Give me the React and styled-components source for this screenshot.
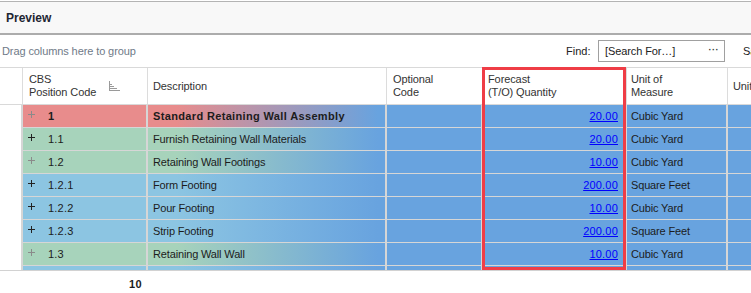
import React from "react";
import styled, { createGlobalStyle } from "styled-components";

const Global = createGlobalStyle`
  html, body { margin: 0; padding: 0; background: #ffffff; overflow: hidden; }
  body { font-family: "Liberation Sans", Arial, sans-serif; font-size: 11px; color: #1c1c1c; }
  * { box-sizing: border-box; }
`;

const BLUE = "#68a3df";
const LEVEL_COLORS = { 1: "#e88c8c", 2: "#a7d3bb", 3: "#8cc5e2" };
const COLS = "23px 125px 239px 96px 144px 101px 60px";
const LINE = "#d6d6d6";

const Page = styled.div`
  width: 751px;
  height: 293px;
  padding-top: 1px;
  overflow: hidden;
`;

const TitleBar = styled.div`
  height: 34px;
  border-top: 1px solid #b4b4b4;
  border-bottom: 2px solid #acacac;
  background: #f8f8f8;
  display: flex;
  align-items: center;
  padding-left: 6px;
  font-size: 12px;
  font-weight: bold;
  color: #1e2633;
`;

const GroupBar = styled.div`
  height: 32px;
  display: flex;
  align-items: center;
  white-space: nowrap;
`;

const DragHint = styled.div`
  flex: 0 0 566px;
  padding-left: 2px;
  color: #6f7a88;
  letter-spacing: -0.1px;
`;

const FindLabel = styled.span`
  flex: 0 0 32px;
  color: #222;
`;

const SearchBox = styled.div`
  flex: 0 0 127px;
  height: 22px;
  border: 1px solid #a0a0a0;
  display: flex;
  align-items: center;
  justify-content: space-between;
  padding: 0 5px 0 6px;
  color: #222;
  letter-spacing: -0.1px;
`;

const Dots = styled.span`
  font-weight: bold;
  letter-spacing: 0.5px;
  font-size: 9px;
  color: #333;
  margin-top: -2px;
`;

const Trailing = styled.span`
  flex: 0 0 auto;
  margin-left: 18px;
  color: #222;
`;

const GridWrap = styled.div`
  position: relative;
`;

const HeaderRow = styled.div`
  display: grid;
  grid-template-columns: ${COLS};
  height: 38px;
  border-top: 1px solid #d9d9d9;
  border-bottom: 1px solid #d9d9d9;
  background: #fff;
`;

const HeaderCell = styled.div`
  border-right: 1px solid #dcdcdc;
  padding: 0 0 0 ${(p) => p.$pad ?? 5}px;
  display: flex;
  align-items: center;
  line-height: 13px;
  color: #333;
  letter-spacing: -0.1px;
  white-space: nowrap;
  overflow: hidden;
`;

const SortIcon = styled.svg`
  margin-left: 13px;
  flex: 0 0 auto;
`;

const Body = styled.div`
  height: 166px;
  overflow: hidden;
  border-bottom: 1px solid #d2d2d2;
`;

const Row = styled.div`
  display: grid;
  grid-template-columns: ${COLS};
  height: 23px;
`;

const Cell = styled.div`
  border-right: 2px solid ${LINE};
  border-bottom: 1px solid ${LINE};
  background: ${BLUE};
  display: flex;
  align-items: center;
  padding: 0 5px;
  white-space: nowrap;
  overflow: hidden;
  letter-spacing: -0.15px;
`;

const UnitCell = styled(Cell)`
  padding-left: 4px;
`;

const IndicatorCell = styled.div`
  background: #fff;
  border-right: 2px solid ${LINE};
`;

const CodeCell = styled(Cell)`
  background: ${(p) => LEVEL_COLORS[p.$level]};
  padding-left: 5px;
`;

const DescCell = styled(Cell)`
  background: linear-gradient(to right, ${(p) => LEVEL_COLORS[p.$level]} 0%, ${(p) => LEVEL_COLORS[p.$level]} 12%, ${BLUE} 97%);
  font-weight: ${(p) => (p.$bold ? "bold" : "normal")};
  letter-spacing: ${(p) => (p.$bold ? "0.35px" : "-0.15px")};
`;

const QtyCell = styled(Cell)`
  justify-content: flex-end;
  padding-right: 7px;
`;

const QtyLink = styled.a`
  color: #0000ff;
  text-decoration: underline;
  letter-spacing: 0.2px;
`;

const Code = styled.span`
  margin-left: 13px;
  font-weight: ${(p) => (p.$bold ? "bold" : "normal")};
  letter-spacing: 0.2px;
`;

const PlusIcon = styled.svg`
  flex: 0 0 auto;
  margin-top: -3px;
`;

const Highlight = styled.div`
  position: absolute;
  left: 482px;
  top: 0;
  width: 144px;
  height: 203px;
  border: 3px solid #ef3d46;
  pointer-events: none;
`;

const Footer = styled.div`
  display: grid;
  grid-template-columns: ${COLS};
  height: 26px;
  align-items: center;
`;

const FooterValue = styled.div`
  grid-column: 2;
  text-align: right;
  padding-right: 6px;
  font-weight: bold;
  letter-spacing: 0.4px;
`;

const rows = [
  { level: 1, code: "1", desc: "Standard Retaining Wall Assembly", qty: "20.00", unit: "Cubic Yard", bold: true, faint: true },
  { level: 2, code: "1.1", desc: "Furnish Retaining Wall Materials", qty: "20.00", unit: "Cubic Yard" },
  { level: 2, code: "1.2", desc: "Retaining Wall Footings", qty: "10.00", unit: "Cubic Yard", faint: true },
  { level: 3, code: "1.2.1", desc: "Form Footing", qty: "200.00", unit: "Square Feet" },
  { level: 3, code: "1.2.2", desc: "Pour Footing", qty: "10.00", unit: "Cubic Yard" },
  { level: 3, code: "1.2.3", desc: "Strip Footing", qty: "200.00", unit: "Square Feet" },
  { level: 2, code: "1.3", desc: "Retaining Wall Wall", qty: "10.00", unit: "Cubic Yard", faint: true },
  { level: 3, code: "1.3.1", desc: "Form Wall", qty: "10.00", unit: "Cubic Yard" },
];

function Plus({ faint }) {
  return (
    <PlusIcon width="7" height="7" viewBox="0 0 7 7">
      <path d="M3.5 0V7M0 3.5H7" stroke={faint ? "#8a8a8a" : "#222"} strokeWidth="1" />
    </PlusIcon>
  );
}

export default function App() {
  return (
    <Page>
      <Global />
      <TitleBar>Preview</TitleBar>
      <GroupBar>
        <DragHint>Drag columns here to group</DragHint>
        <FindLabel>Find:</FindLabel>
        <SearchBox>
          <span>[Search For…]</span>
          <Dots>···</Dots>
        </SearchBox>
        <Trailing>Save</Trailing>
      </GroupBar>
      <GridWrap>
        <HeaderRow>
          <HeaderCell />
          <HeaderCell $pad={6}>
            <span>
              CBS
              <br />
              Position Code
            </span>
            <SortIcon width="12" height="10" viewBox="0 0 12 10">
              <path d="M0.5 0V10M0 3.5H3M0 5.5H5M0 7.5H8M0 9.5H11" stroke="#9a9a9a" strokeWidth="1" />
            </SortIcon>
          </HeaderCell>
          <HeaderCell>Description</HeaderCell>
          <HeaderCell $pad={6}>
            <span>
              Optional
              <br />
              Code
            </span>
          </HeaderCell>
          <HeaderCell>
            <span>
              Forecast
              <br />
              (T/O) Quantity
            </span>
          </HeaderCell>
          <HeaderCell $pad={4}>
            <span>
              Unit of
              <br />
              Measure
            </span>
          </HeaderCell>
          <HeaderCell>Unit Cost</HeaderCell>
        </HeaderRow>
        <Body>
          {rows.map((r) => (
            <Row key={r.code}>
              <IndicatorCell />
              <CodeCell $level={r.level}>
                <Plus faint={r.faint} />
                <Code $bold={r.bold}>{r.code}</Code>
              </CodeCell>
              <DescCell $level={r.level} $bold={r.bold}>
                {r.desc}
              </DescCell>
              <Cell />
              <QtyCell>
                <QtyLink>{r.qty}</QtyLink>
              </QtyCell>
              <UnitCell>{r.unit}</UnitCell>
              <Cell />
            </Row>
          ))}
        </Body>
        <Highlight />
      </GridWrap>
      <Footer>
        <FooterValue>10</FooterValue>
      </Footer>
    </Page>
  );
}
